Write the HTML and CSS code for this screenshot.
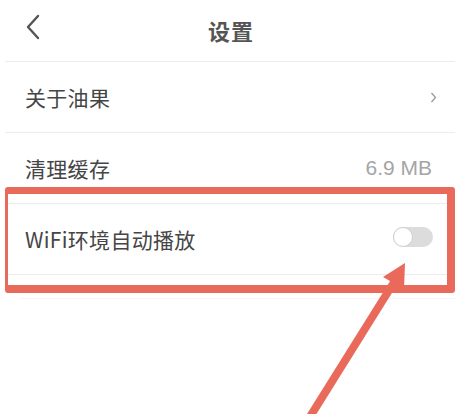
FILE: index.html
```html
<!DOCTYPE html>
<html lang="zh">
<head>
<meta charset="utf-8">
<title>设置</title>
<link rel="stylesheet" href="styles.css">
</head>
<body>
<div class="page">
  <header class="topbar">
    <svg class="back" width="16" height="26" viewBox="0 0 16 26"><polyline points="13,2 3,13 13,24" fill="none" stroke="#555" stroke-width="2.4" stroke-linecap="round" stroke-linejoin="round"/></svg>
    <h1 class="title">设置</h1>
  </header>
  <div class="list">
    <div class="row">
      <span class="label">关于油果</span>
      <svg class="chev" width="7" height="11" viewBox="0 0 7 11"><polyline points="1.5,1 5.5,5.5 1.5,10" fill="none" stroke="#999" stroke-width="1.3"/></svg>
    </div>
    <div class="row">
      <span class="label">清理缓存</span>
      <span class="value">6.9 MB</span>
    </div>
    <div class="row">
      <span class="label">WiFi环境自动播放</span>
      <span class="toggle"><span class="knob"></span></span>
    </div>
    <div class="spacer"></div>
  </div>
  <div class="highlight"></div>
  <svg class="arrow" width="472" height="414" viewBox="0 0 472 414">
    <line x1="308" y1="420" x2="396" y2="279" stroke="#e96a5a" stroke-width="8"/>
    <polygon points="405,263 383,277 404,289" fill="#e96a5a"/>
  </svg>
</div>
</body>
</html>
```
FILE: styles.css
```css
* { box-sizing: border-box; }
html, body { margin: 0; padding: 0; background: #fff; }
body {
  font-family: "Noto Sans CJK SC", "Liberation Sans", sans-serif;
  width: 472px;
  height: 414px;
  overflow: hidden;
}
.page {
  position: relative;
  width: 472px;
  height: 414px;
}
.topbar {
  position: relative;
  height: 62px;
  margin: 0 17px 0 5px;
  border-bottom: 1px solid #ececec;
  display: flex;
  align-items: center;
  justify-content: center;
}
.back {
  position: absolute;
  left: 20px;
  top: 14px;
}
.title {
  margin: 0 0 2px 0;
  font-size: 22px;
  font-weight: 700;
  color: #555;
  letter-spacing: 1px;
  padding-left: 2px;
}
.list {
  margin: 0 17px 0 5px;
}
.row {
  height: 71px;
  border-bottom: 1px solid #ececec;
  display: flex;
  align-items: center;
  justify-content: space-between;
  padding: 0 22px 0 20px;
}
.label {
  font-size: 21px;
  color: #454545;
  line-height: 1;
  letter-spacing: 0.3px;
}
.chev { margin-right: -4px; margin-top: 0; }
.value {
  font-family: "Liberation Sans", "Noto Sans", sans-serif;
  font-size: 21px;
  color: #a5a5a5;
  margin-right: 1px;
}
.toggle {
  width: 40px;
  height: 20px;
  border-radius: 10px;
  background: #dcdcdc;
  display: flex;
  align-items: center;
  margin-top: -4px;
}
.knob {
  width: 20px;
  height: 20px;
  border-radius: 50%;
  background: #fff;
  border: 1px solid #cfcfcf;
}
.spacer {
  height: 24px;
  border-bottom: 1px solid #f5f5f5;
  margin-left: 15px;
}
.highlight {
  position: absolute;
  left: 5px;
  top: 187px;
  width: 450px;
  height: 106px;
  border-style: solid;
  border-color: #e96a5a;
  border-width: 7px 8px 8px 3px;
  border-radius: 3px;
}
.arrow {
  position: absolute;
  left: 0;
  top: 0;
}
```
